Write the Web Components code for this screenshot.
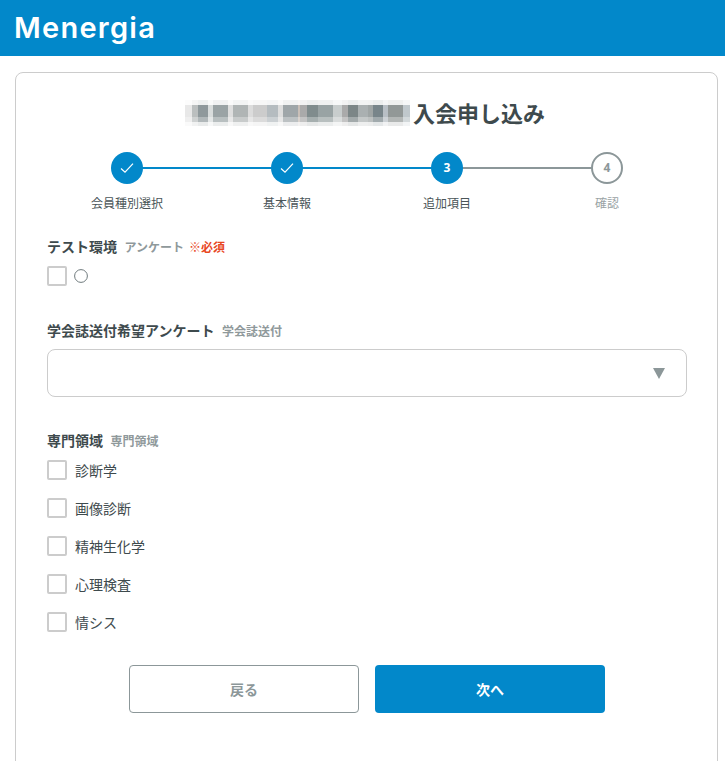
<!DOCTYPE html>
<html lang="ja"><head><meta charset="utf-8"><title>Menergia</title>
<style>
html,body{margin:0;padding:0;height:761px;overflow:hidden;background:#fff}
body{font-family:"Noto Sans CJK JP","Noto Sans",sans-serif;color:#3e4a4d}
</style></head><body>
<app-header>Menergia</app-header>
<form-card>
  <page-title>入会申し込み</page-title>
  <step-bar>
    <step-item state="done" label="会員種別選択"></step-item>
    <step-item state="done" label="基本情報"></step-item>
    <step-item state="current" num="3" label="追加項目"></step-item>
    <step-item state="todo" num="4" label="確認"></step-item>
  </step-bar>
  <form-field label="テスト環境" sub="アンケート" req="※必須" style="--after:34px">
    <check-row><span class="x"><svg width="14" height="14" viewBox="0 0 14 14" style="display:block;margin-left:-1px"><circle cx="7" cy="7" r="6.4" fill="none" stroke="#6f7a7d" stroke-width="1"/></svg></span></check-row>
  </form-field>
  <form-field label="学会誌送付希望アンケート" sub="学会誌送付" style="--after:33px">
    <select-box></select-box>
  </form-field>
  <form-field label="専門領域" sub="専門領域" style="--after:0px">
    <check-row>診断学</check-row>
    <check-row>画像診断</check-row>
    <check-row>精神生化学</check-row>
    <check-row>心理検査</check-row>
    <check-row>情シス</check-row>
  </form-field>
  <nav-buttons></nav-buttons>
</form-card>
<script>
function def(name,html,init){
  customElements.define(name,class extends HTMLElement{
    constructor(){super();this.attachShadow({mode:'open'}).innerHTML=html;}
    connectedCallback(){if(init)init(this,this.shadowRoot);}
  });
}
def('app-header',`<style>
:host{display:flex;align-items:center;height:56px;background:#0288ca;padding:0 0 0 14px;box-sizing:border-box}
span{font:600 29px/1 Inter,"Noto Sans",sans-serif;color:#fff;letter-spacing:1.25px;transform:translateY(-1px)}
</style><span><slot></slot></span>`);
def('form-card',`<style>
:host{display:block;margin:16px 7px 0 15px;padding:26px 30px 0 31px;border:1px solid #ccc;border-radius:8px;height:760px;box-sizing:border-box}
</style><slot></slot>`);
const seg=[[0,7,'#e8e8e8'],[7,13,'#bbbfbf'],[13,23,'#8f999c'],[23,28,'#d8dcdc'],[28,43,'#9aa3a5'],[43,48,'#dedede'],[48,63,'#b0b5b5'],[63,68,'#dcdcdc'],[68,82,'#cccccc'],[82,93,'#b5bcc0'],[93,98,'#dddddd'],[98,113,'#9fa6a9'],[113,115,'#c9bfb8'],[115,122,'#aaaaaa'],[122,133,'#808c8d'],[133,148,'#99a3a4'],[148,157,'#c8cdcd'],[157,163,'#aaaaaa'],[163,173,'#7c8687'],[173,183,'#aab0b1'],[183,188,'#9fa5a5'],[188,198,'#78858a'],[198,203,'#b8bfc5'],[203,218,'#929897'],[218,225,'#c0c8cc']];
const rows=[[2,5,.85],[7,12,0],[19,5,.3],[24,4,.8]];
const mix=(c,t)=>{const n=[1,3,5].map(i=>parseInt(c.substr(i,2),16));return 'rgb('+n.map(v=>Math.round(v+(255-v)*t)).join(',')+')'};
const rects=rows.map(([y,h,t])=>seg.map(([a,b,c])=>`<rect x="${a}" y="${y}" width="${b-a}" height="${h}" fill="${mix(c,t)}"/>`).join('')).join('');
def('page-title',`<style>
:host{display:flex;justify-content:center;align-items:center;height:32px;gap:3px;margin-right:4px;margin-top:-3px;font-size:22px;font-weight:700;color:#3e4a4d}
.m{width:225px;height:28px;display:block;flex:none}
</style><svg class="m" viewBox="0 0 225 28" aria-hidden="true"><defs><filter id="b" x="-2%" y="-20%" width="104%" height="140%"><feGaussianBlur stdDeviation="0.6"/></filter></defs><g filter="url(#b)">${rects}</g></svg><span><slot></slot></span>`);
def('step-bar',`<style>
:host{display:grid;grid-template-columns:repeat(4,160px);margin:24px 0 24px 0;justify-content:start}
</style><slot></slot>`);
def('step-item',`<style>
:host{display:flex;flex-direction:column;align-items:center;position:relative;font-size:12px;line-height:18px;color:#4a5558}
.c{box-sizing:border-box;width:32px;height:32px;border-radius:50%;background:#0288ca;color:#fff;display:flex;align-items:center;justify-content:center;font:700 12px/1 "Noto Sans",sans-serif;position:relative;z-index:1}
.l{position:absolute;left:50%;width:100%;top:15px;height:2px;background:#0288ca}
:host([state=current]) .l{background:#8c9799}
:host(:last-child) .l{display:none}
:host([state=todo]) .c{background:#fff;border:2px solid #8c9799;color:#8c9799}
:host([state=todo]){color:#9aa3a5}
.t{margin-top:10px}
svg{display:block}
</style><div class="l"></div><div class="c"></div><div class="t"></div>`,(el,r)=>{
  r.querySelector('.t').textContent=el.getAttribute('label');
  r.querySelector('.c').innerHTML=el.getAttribute('state')==='done'
   ?'<svg width="14" height="12" viewBox="0 0 14 12"><path d="M1 6.5 5 10.2 13 1.6" fill="none" stroke="#fff" stroke-width="1.2"/></svg>'
   :el.getAttribute('num');
});
def('form-field',`<style>
:host{display:block;margin-bottom:var(--after,0)}
.h{display:flex;align-items:baseline;height:20px;line-height:20px;font-size:14px;font-weight:700;color:#3e4a4d;margin-bottom:10px}
.s{font-size:12px;color:#8f999b;margin-left:7.5px}
.r{font-size:12px;color:#e8471f;margin-left:5px}
</style><div class="h"><span class="a"></span><span class="s"></span><span class="r"></span></div><slot></slot>`,(el,r)=>{
  r.querySelector('.a').textContent=el.getAttribute('label');
  r.querySelector('.s').textContent=el.getAttribute('sub');
  r.querySelector('.r').textContent=el.getAttribute('req')||'';
});
def('check-row',`<style>
:host{display:flex;align-items:center;height:20px;margin-bottom:18px;font-size:14px;line-height:20px;color:#3e4a4d}
i{box-sizing:border-box;width:20px;height:20px;border:2px solid #ccc;border-radius:2px;margin-right:8px;background:#fff;flex:none}
::slotted(.x){display:block}
</style><i></i><slot></slot>`);
def('select-box',`<style>
:host{display:flex;align-items:center;justify-content:flex-end;box-sizing:border-box;height:48px;border:1px solid #ccc;border-radius:8px;padding-right:21px;background:#fff;margin-top:-1px}
i{display:block;width:0;height:0;border-left:6.5px solid transparent;border-right:6.5px solid transparent;border-top:11px solid #8c9799;margin-top:1px}
</style><i></i>`);
def('nav-buttons',`<style>
:host{display:flex;justify-content:center;gap:16px;margin-top:33px}
div{box-sizing:border-box;width:230px;height:48px;border-radius:4px;display:flex;align-items:center;justify-content:center;font-size:14px;font-weight:700}
.b{border:1px solid #8c9799;color:#8c9799;background:#fff}
.n{background:#0288ca;color:#fff}
</style><div class="b">戻る</div><div class="n">次へ</div>`);
</script>
</body></html>
